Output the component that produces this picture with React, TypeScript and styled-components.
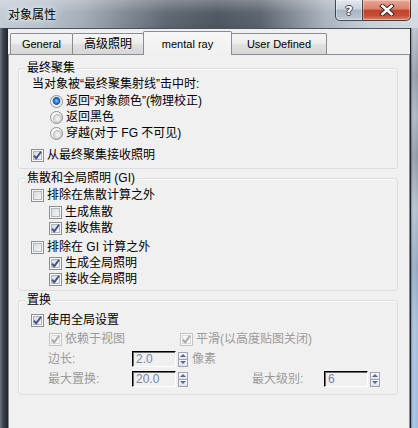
import React from "react";
import styled, { createGlobalStyle } from "styled-components";

const FONT = `"Liberation Sans", "Noto Sans CJK SC", sans-serif`;

const GlobalStyle = createGlobalStyle`
  html, body { margin: 0; padding: 0; }
  body { width: 418px; height: 428px; overflow: hidden; background: #f0f0f0; }
  * { box-sizing: border-box; }
`;

const Window = styled.div`
  width: 418px;
  height: 428px;
  display: flex;
  flex-direction: column;
  overflow: hidden;
  font-family: ${FONT};
  font-size: 12px;
  color: #000;
`;

const TitleBar = styled.div`
  flex: none;
  height: 28px;
  display: flex;
  align-items: flex-start;
  background:
    linear-gradient(180deg, rgba(255, 255, 255, 0.28) 0%, rgba(255, 255, 255, 0.05) 45%, rgba(0, 0, 0, 0) 100%),
    linear-gradient(90deg, #c2cbd5 0%, #b7c1cb 10%, #a1abb5 20%, #7c8691 30%, #5b646e 40%, #4a535d 52%, #56606a 62%, #7f8993 70%, #a9b3bd 78%, #c7cfd7 88%, #d3dae1 100%);
`;

const TitleText = styled.div`
  margin: 7px 0 0 8px;
  line-height: 16px;
  font-size: 12px;
  color: #000;
  text-shadow: 0 0 4px rgba(255, 255, 255, 0.9), 0 0 8px rgba(255, 255, 255, 0.7);
`;

const CaptionButtons = styled.div`
  margin-left: auto;
  margin-right: 7px;
  margin-top: -1px;
  display: flex;
`;

const CaptionButton = styled.div<{ $kind: "help" | "close" }>`
  height: 22px;
  width: ${(p) => (p.$kind === "help" ? 28 : 48)}px;
  border: 1px solid rgba(28, 36, 46, 0.8);
  border-left-width: ${(p) => (p.$kind === "close" ? 0 : 1)}px;
  border-radius: ${(p) => (p.$kind === "help" ? "0 0 0 5px" : "0 0 5px 0")};
  background: ${(p) =>
    p.$kind === "help"
      ? "linear-gradient(180deg, #e2e8ee 0%, #c9d2db 45%, #a9b5c1 52%, #b3bfcb 80%, #c3cdd7 100%)"
      : "linear-gradient(180deg, #eaa795 0%, #da7f69 45%, #c2432c 52%, #c64d35 78%, #dc8467 100%)"};
  box-shadow: inset 0 0 0 1px rgba(255, 255, 255, 0.35);
  display: flex;
  align-items: center;
  justify-content: center;
`;

const HelpGlyph = styled.span`
  font-family: "DejaVu Sans", sans-serif;
  font-weight: bold;
  font-size: 13px;
  line-height: 13px;
  color: #fff;
  text-shadow: 1px 0 0 #3b4450, -1px 0 0 #3b4450, 0 1px 0 #3b4450, 0 -1px 0 #3b4450;
`;

const Body = styled.div`
  flex: 1;
  min-height: 0;
  display: flex;
`;

const LeftFrame = styled.div`
  flex: none;
  width: 7px;
  background: linear-gradient(90deg, #6f7985 0px, #4b545e 2px, #353d46 4px, #262d35 7px);
`;

const RightFrame = styled.div`
  flex: none;
  width: 8px;
  border-left: 1px solid #1e2329;
  background:
    linear-gradient(90deg, rgba(40, 50, 60, 0.35) 0px, rgba(255, 255, 255, 0.15) 2px, rgba(0, 0, 0, 0) 7px),
    linear-gradient(180deg, #b9c3cd 0%, #8f9aa5 12%, #a9b5c1 22%, #8c98a4 32%, #b2c0cd 45%, #93a9c1 60%, #a6c0dc 75%, #9ebde0 100%);
`;

const Client = styled.div`
  flex: 1;
  min-width: 0;
  background: #f0f0f0;
  border-top: 1px solid #4b535d;
  border-left: 1px solid #1f262d;
  display: flex;
  flex-direction: column;
  overflow: hidden;
  padding-top: 2px;
`;

const TabRow = styled.div`
  flex: none;
  height: 23px;
  display: flex;
  align-items: flex-end;
  padding-left: 2px;
  position: relative;
  z-index: 1;
`;

const Tab = styled.div<{ $active?: boolean; $w: number; $latin?: boolean }>`
  position: relative;
  z-index: ${(p) => (p.$active ? 2 : 1)};
  width: ${(p) => p.$w}px;
  height: ${(p) => (p.$active ? 24 : 21)}px;
  margin-bottom: ${(p) => (p.$active ? -1 : 0)}px;
  margin-left: -1px;
  &:first-child { margin-left: 0; }
  border: 1px solid #898c95;
  border-bottom: none;
  border-radius: 2px 2px 0 0;
  background: ${(p) =>
    p.$active
      ? "linear-gradient(180deg, #f7f7f7 0%, #f0f0f0 100%)"
      : "linear-gradient(180deg, #f5f5f5 0%, #ededed 45%, #dfdfdf 55%, #d7d7d7 100%)"};
  display: flex;
  align-items: center;
  justify-content: center;
  font-size: ${(p) => (p.$latin ? 11 : 12)}px;
  line-height: 14px;
  color: #000;
  white-space: nowrap;
`;

const Panel = styled.div`
  flex: 1;
  border: 1px solid #898c95;
  border-bottom: none;
  padding: 6px 11px 0 9px;
  display: flex;
  flex-direction: column;
`;

const GroupBox = styled.fieldset<{ $pb: number }>`
  margin: 0;
  min-width: 0;
  border: 1px solid #d5dfe5;
  border-radius: 3px;
  box-shadow: inset 1px 1px 0 #fbfbfb;
  padding: 0 0 ${(p) => p.$pb}px 6px;
  & + & { margin-top: 2px; }
`;

const Legend = styled.legend`
  padding: 0 2px;
  line-height: 14px;
  font-size: 12px;
  background: #f0f0f0;
`;

const Row = styled.div<{ $indent: number; $mt?: number }>`
  display: flex;
  align-items: center;
  height: 16px;
  padding-left: ${(p) => p.$indent}px;
  margin-top: ${(p) => p.$mt ?? 0}px;
  line-height: 16px;
  white-space: nowrap;
`;

const Text = styled.span<{ $disabled?: boolean }>`
  color: ${(p) => (p.$disabled ? "#9b9b9b" : "#000")};
`;

const Cell = styled.div<{ $w: number }>`
  flex: none;
  width: ${(p) => p.$w}px;
  display: flex;
  align-items: center;
`;

const CheckBox = styled.span<{ $disabled?: boolean }>`
  flex: none;
  width: 13px;
  height: 13px;
  margin-right: 3px;
  border: 1px solid ${(p) => (p.$disabled ? "#c4c4c4" : "#8e8f8f")};
  background: ${(p) =>
    p.$disabled ? "#f4f4f4" : "linear-gradient(135deg, #cfd2d6 0%, #e9eaeb 55%, #fbfbfb 100%)"};
  box-shadow: ${(p) =>
    p.$disabled
      ? "inset 0 0 0 1px #f7f7f7, inset 0 0 0 2px #d9d9d9"
      : "inset 0 0 0 1px #f6f6f6, inset 0 0 0 2px #b3b7bc"};
  display: flex;
  align-items: center;
  justify-content: center;
`;

const Radio = styled.span<{ $checked?: boolean }>`
  flex: none;
  width: 13px;
  height: 13px;
  margin-right: 3px;
  border-radius: 50%;
  border: 1px solid #8e8f8f;
  background: ${(p) =>
    p.$checked
      ? "radial-gradient(circle at 50% 45%, #9fd3fb 0px, #3f8fdc 1.6px, #1d5fb3 3px, #2a64a8 3.6px, #e6eef6 4.2px, #f7f7f7 5.5px)"
      : "radial-gradient(circle at 60% 60%, #fbfbfb 0px, #e6e7e8 2px, #cfd2d5 3.8px, #b9bdc2 4.3px, #f4f4f4 4.8px, #f7f7f7 5.5px)"};
`;

const SpinInput = styled.div`
  flex: none;
  width: 44px;
  height: 16px;
  border-top: 1px solid #000;
  border-left: 1px solid #000;
  border-right: 1px solid #ffffff;
  border-bottom: 1px solid #ffffff;
  box-shadow: inset 1px 1px 0 #6a6a6a;
  background: #f0f0f0;
  padding-left: 3px;
  font-family: "Liberation Sans", sans-serif;
  font-size: 12px;
  line-height: 14px;
  color: #7a84a6;
`;

const SpinBox = styled.div`
  flex: none;
  width: 10px;
  height: 15px;
  margin-left: 2px;
  border: 1px solid #9ea3ad;
  display: flex;
  flex-direction: column;
`;

const SpinHalf = styled.div<{ $dir: "up" | "down" }>`
  flex: 1;
  display: flex;
  align-items: center;
  justify-content: center;
  background: linear-gradient(180deg, #fafbfd 0%, #dde2ea 100%);
  & + & { border-top: 1px solid #9ea3ad; }
  &::after {
    content: "";
    border-left: 3px solid transparent;
    border-right: 3px solid transparent;
    ${(p) => (p.$dir === "up" ? "border-bottom" : "border-top")}: 3px solid #56688f;
  }
`;

const FieldLabel = styled.span<{ $w: number; $ml?: number }>`
  flex: none;
  width: ${(p) => p.$w}px;
  margin-left: ${(p) => p.$ml ?? 0}px;
  color: #9b9b9b;
`;

const Unit = styled.span`
  margin-left: 4px;
  color: #9b9b9b;
`;

const CloseIcon = () => (
  <svg width="16" height="12" viewBox="0 0 16 12">
    <path d="M3.5 2 L12.5 10 M12.5 2 L3.5 10" stroke="#3a2a2a" strokeWidth="4.6" strokeLinecap="square" fill="none" />
    <path d="M3.5 2 L12.5 10 M12.5 2 L3.5 10" stroke="#ffffff" strokeWidth="2.6" strokeLinecap="square" fill="none" />
  </svg>
);

const CheckMark = ({ disabled }: { disabled?: boolean }) => (
  <svg width="11" height="11" viewBox="0 0 11 11">
    <path
      d="M2 5.6 L4.2 8.4 L9 1.8"
      stroke={disabled ? "#a9a9a9" : "#3f5389"}
      strokeWidth="1.9"
      fill="none"
      strokeLinejoin="round"
    />
  </svg>
);

const Check = ({ checked, disabled }: { checked?: boolean; disabled?: boolean }) => (
  <CheckBox $disabled={disabled}>{checked ? <CheckMark disabled={disabled} /> : null}</CheckBox>
);

const Spinner = ({ value }: { value: string }) => (
  <>
    <SpinInput>{value}</SpinInput>
    <SpinBox>
      <SpinHalf $dir="up" />
      <SpinHalf $dir="down" />
    </SpinBox>
  </>
);

export default function App() {
  return (
    <>
      <GlobalStyle />
      <Window>
        <TitleBar>
          <TitleText>对象属性</TitleText>
          <CaptionButtons>
            <CaptionButton $kind="help">
              <HelpGlyph>?</HelpGlyph>
            </CaptionButton>
            <CaptionButton $kind="close">
              <CloseIcon />
            </CaptionButton>
          </CaptionButtons>
        </TitleBar>
        <Body>
          <LeftFrame />
          <Client>
            <TabRow>
              <Tab $w={63} $latin>General</Tab>
              <Tab $w={72}>高级照明</Tab>
              <Tab $w={89} $latin $active>mental ray</Tab>
              <Tab $w={96} $latin>User Defined</Tab>
            </TabRow>
            <Panel>
              <GroupBox $pb={5}>
                <Legend>最终聚集</Legend>
                <Row $indent={7} $mt={1}>
                  <Text>当对象被“最终聚集射线”击中时:</Text>
                </Row>
                <Row $indent={25} $mt={1}>
                  <Radio $checked />
                  <Text>返回“对象颜色”(物理校正)</Text>
                </Row>
                <Row $indent={25}>
                  <Radio />
                  <Text>返回黑色</Text>
                </Row>
                <Row $indent={25}>
                  <Radio />
                  <Text>穿越(对于 FG 不可见)</Text>
                </Row>
                <Row $indent={6} $mt={6}>
                  <Check checked />
                  <Text>从最终聚集接收照明</Text>
                </Row>
              </GroupBox>

              <GroupBox $pb={3}>
                <Legend>焦散和全局照明 (GI)</Legend>
                <Row $indent={6} $mt={2}>
                  <Check />
                  <Text>排除在焦散计算之外</Text>
                </Row>
                <Row $indent={24} $mt={1}>
                  <Check />
                  <Text>生成焦散</Text>
                </Row>
                <Row $indent={24}>
                  <Check checked />
                  <Text>接收焦散</Text>
                </Row>
                <Row $indent={6} $mt={3}>
                  <Check />
                  <Text>排除在 GI 计算之外</Text>
                </Row>
                <Row $indent={24}>
                  <Check checked />
                  <Text>生成全局照明</Text>
                </Row>
                <Row $indent={24}>
                  <Check checked />
                  <Text>接收全局照明</Text>
                </Row>
              </GroupBox>

              <GroupBox $pb={7}>
                <Legend>置换</Legend>
                <Row $indent={6} $mt={5}>
                  <Check checked />
                  <Text>使用全局设置</Text>
                </Row>
                <Row $indent={24} $mt={3}>
                  <Cell $w={131}>
                    <Check checked disabled />
                    <Text $disabled>依赖于视图</Text>
                  </Cell>
                  <Cell $w={200}>
                    <Check checked disabled />
                    <Text $disabled>平滑(以高度贴图关闭)</Text>
                  </Cell>
                </Row>
                <Row $indent={23} $mt={4}>
                  <FieldLabel $w={84}>边长:</FieldLabel>
                  <Spinner value="2.0" />
                  <Unit>像素</Unit>
                </Row>
                <Row $indent={23} $mt={4}>
                  <FieldLabel $w={84}>最大置换:</FieldLabel>
                  <Spinner value="20.0" />
                  <FieldLabel $w={72} $ml={64}>最大级别:</FieldLabel>
                  <Spinner value="6" />
                </Row>
              </GroupBox>
            </Panel>
          </Client>
          <RightFrame />
        </Body>
      </Window>
    </>
  );
}
